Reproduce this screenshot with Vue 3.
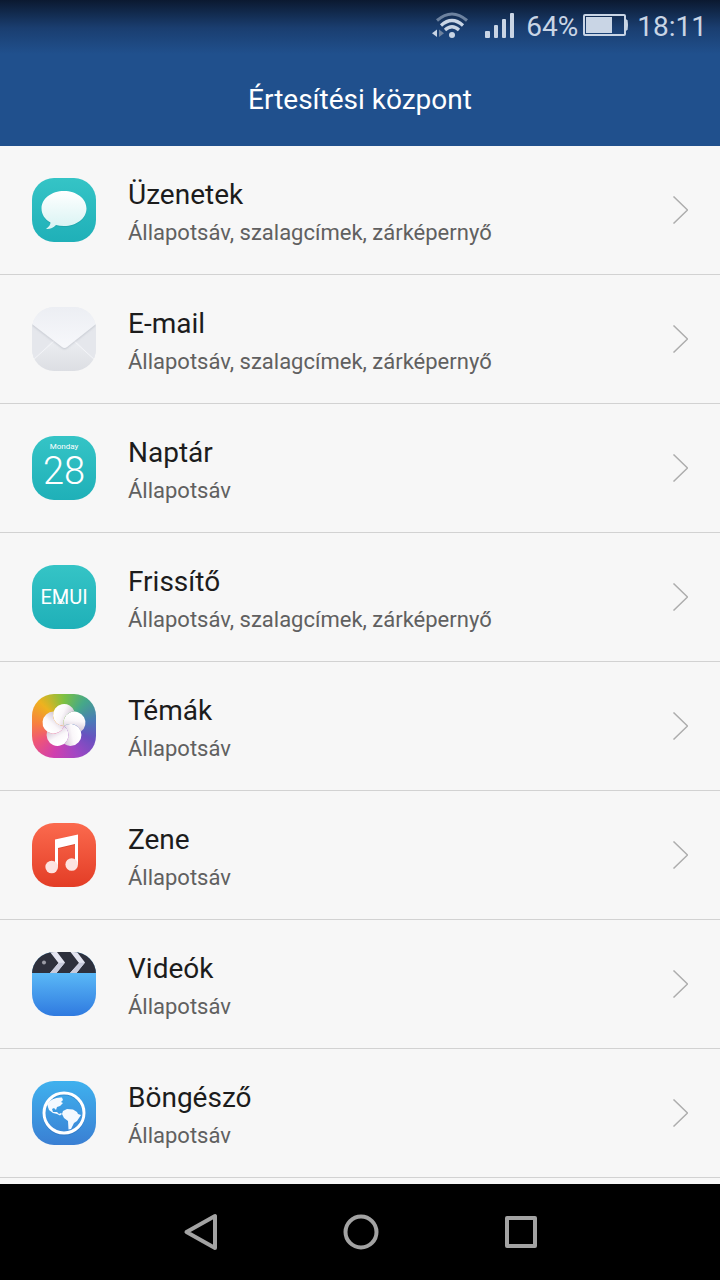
<template>
  <div class="screen">
    <header class="header">
      <div class="status">
        <svg class="wifi" width="38" height="30" viewBox="0 0 38 30" fill="none">
          <path d="M5 9.500 Q20 -3.500 35 9.500" stroke="#6d829f" stroke-width="3" />
          <path d="M9 14.500 Q20 4.500 31 14.500" stroke="#c9d5e5" stroke-width="3.200" />
          <path d="M13 19 Q20 12.500 27 19" stroke="#c9d5e5" stroke-width="3.200" />
          <circle cx="20" cy="24" r="3" fill="#c9d5e5" />
          <path d="M5 18.500 V26 L0 22.300 Z" fill="#c9d5e5" />
          <path d="M7 18.500 V26 L12 22.300 Z" fill="#6d829f" />
        </svg>
        <svg class="signal" width="30" height="26" viewBox="0 0 30 26" fill="#c9d5e5">
          <rect x="0" y="18" width="5" height="7" rx="1" />
          <rect x="9" y="12" width="4" height="13" rx="1" />
          <rect x="17" y="6" width="4" height="19" rx="1" />
          <rect x="25" y="0" width="4" height="25" rx="1" />
        </svg>
        <span class="percent">64%</span>
        <svg class="battery" width="46" height="24" viewBox="0 0 46 24">
          <rect x="1" y="1" width="41" height="20" rx="1" fill="none" stroke="#c9d5e5" stroke-width="2" />
          <rect x="3" y="3" width="26" height="16" fill="#c9d5e5" />
          <path d="M43 6 H44 Q45 11 44 16 H43 Z" fill="#c9d5e5" stroke="#c9d5e5" />
        </svg>
        <span>18:11</span>
      </div>
      <h1>Értesítési központ</h1>
    </header>

    <main>
      <ul class="list">
        <li v-for="app in apps" :key="app.icon">
          <button type="button" class="row">
            <span class="tile" :class="app.icon">
              <svg v-if="app.icon === 'messages'" viewBox="0 0 64 64">
                <defs>
                  <linearGradient id="bubble" x1="0" y1="0" x2="0" y2="1">
                    <stop offset="0" stop-color="#fff" />
                    <stop offset="1" stop-color="#d8f3f3" />
                  </linearGradient>
                </defs>
                <path d="M32 14 C44.500 14 54.500 21.500 54.500 31.500 S44.500 49 32 49 Q27.500 49 24 48 Q20 51.500 14.500 51 Q18.500 48.500 18.500 45.500 C13 42.500 9.500 37.500 9.500 31.500 C9.500 21.500 19.500 14 32 14 Z" fill="#178f96" opacity=".35" />
                <path d="M32 13 C44.500 13 54.500 20.500 54.500 30.500 S44.500 48 32 48 Q27.500 48 24 47 Q20 51.500 14 51 Q18.500 47.500 18.500 44.500 C13 41.500 9.500 36.500 9.500 30.500 C9.500 20.500 19.500 13 32 13 Z" fill="url(#bubble)" />
              </svg>

              <svg v-else-if="app.icon === 'email'" viewBox="0 0 64 64">
                <defs>
                  <linearGradient id="flap" x1="0" y1="0" x2="0" y2="1">
                    <stop offset="0" stop-color="#eceef3" />
                    <stop offset="1" stop-color="#f7f8fb" />
                  </linearGradient>
                  <filter id="flapShade" x="-10%" y="-10%" width="120%" height="130%">
                    <feDropShadow dx="0" dy="1" stdDeviation="1" flood-color="#9da2ad" flood-opacity=".5" />
                  </filter>
                </defs>
                <path d="M0 17 L20 34 L0 54 Z M64 17 L44 34 L64 54 Z" fill="#e5e7ec" />
                <path d="M0 54 L22 34 M64 54 L42 34" stroke="#f4f5f8" />
                <path d="M0 0 H64 V17 L35 40 Q32.500 42 30 40 L0 17 Z" fill="url(#flap)" filter="url(#flapShade)" />
              </svg>

              <svg v-else-if="app.icon === 'calendar'" viewBox="0 0 64 64" fill="#fff" text-anchor="middle">
                <text class="weekday" x="32" y="13">Monday</text>
                <text class="day" x="32" y="48">28</text>
              </svg>

              <svg v-else-if="app.icon === 'updater'" viewBox="0 0 64 64" fill="#fff" text-anchor="middle">
                <text class="emui" x="32" y="39">EMUI</text>
                <path d="M25.500 38.300 L29 34 L32.500 38.300 Z" fill="none" stroke="#fff" />
              </svg>

              <svg v-else-if="app.icon === 'themes'" viewBox="0 0 64 64">
                <defs>
                  <linearGradient id="petal" gradientUnits="userSpaceOnUse" x1="24" y1="18" x2="39" y2="25">
                    <stop offset="0" stop-color="#fff" />
                    <stop offset=".4" stop-color="#faf7fa" />
                    <stop offset="1" stop-color="#d3c6d6" />
                  </linearGradient>
                </defs>
                <path
                  v-for="n in 5"
                  :key="n"
                  d="M32 32 A11 11 0 1 1 42.500 17.600 A11 11 0 0 0 32 32 Z"
                  fill="url(#petal)"
                  :transform="`rotate(${n * 72} 32 32)`"
                />
              </svg>

              <svg v-else-if="app.icon === 'music'" viewBox="0 0 64 64">
                <path d="M23 16.500 L46 11.500 V41 H43 V21 L26 25 V44 H23 Z" fill="#a92a18" opacity=".3" transform="translate(0 1)" />
                <path d="M23 16.500 L46 11.500 V41 H43 V21 L26 25 V44 H23 Z" fill="#fff" />
                <circle cx="19.700" cy="44" r="6.300" fill="#fde3e0" />
                <circle cx="39.700" cy="41.500" r="6.300" fill="#fde3e0" />
              </svg>

              <svg v-else-if="app.icon === 'videos'" viewBox="0 0 64 64">
                <rect width="64" height="21" fill="#2e303c" />
                <path d="M18 0 H25 L33 10.500 L24.500 21 H18 L26.500 11 Z M38.500 0 H45 L53 10.500 L44.500 21 H38 L47 11 Z" fill="#e3e4f0" />
                <path d="M26.500 11 L33 10.500 L24.500 21 H18 Z M47 11 L53 10.500 L44.500 21 H38 Z" fill="#c9cbdc" />
                <circle cx="12" cy="10.500" r="2" fill="#9b9ca6" />
              </svg>

              <svg v-else viewBox="0 0 64 64">
                <circle cx="32" cy="33" r="20" fill="none" stroke="#1f62ad" stroke-width="3" opacity=".35" />
                <circle cx="32" cy="32" r="20" fill="none" stroke="#fff" stroke-width="3" />
                <path d="M15 23 Q20 16 30 16.500 L31 19 L29 21 L31 22 L28 25 L25 26 L24 29 L22 27 L20 28 L21 31 L25 31 L27 33 L29 32 L30 33 L28 34.500 L25 33 L21 32 L17 29 Z" fill="#f4f9ff" />
                <path d="M31 30 L35 28 L41 28.500 L45 31 L46 33 L49 34 L45 40 L42 42 L39 48 L36.500 48.500 L36 40 L32 37 L30 33 Z" fill="#f4f9ff" />
              </svg>
            </span>
            <span class="texts">
              <span class="name">{{ app.name }}</span>
              <span class="detail">{{ app.detail }}</span>
            </span>
            <svg class="chevron" width="16" height="28" viewBox="0 0 16 28" fill="none">
              <path d="M1.500 0.500 L15.500 14 L1.500 27.500" stroke="#adadad" stroke-width="1.500" />
            </svg>
          </button>
        </li>
      </ul>
    </main>

    <nav class="navbar">
      <button type="button" aria-label="Vissza">
        <svg width="40" height="40" viewBox="0 0 40 40">
          <path d="M35 4 V36 L6.500 20 Z" />
        </svg>
      </button>
      <button type="button" aria-label="Kezdőképernyő">
        <svg width="40" height="40" viewBox="0 0 40 40">
          <circle cx="21" cy="20" r="15.500" />
        </svg>
      </button>
      <button type="button" aria-label="Legutóbbi alkalmazások">
        <svg width="40" height="40" viewBox="0 0 40 40">
          <rect x="7" y="6" width="28" height="28" />
        </svg>
      </button>
    </nav>
  </div>
</template>

<script setup>
const all = 'Állapotsáv, szalagcímek, zárképernyő'
const bar = 'Állapotsáv'

const apps = [
  { icon: 'messages', name: 'Üzenetek', detail: all },
  { icon: 'email', name: 'E-mail', detail: all },
  { icon: 'calendar', name: 'Naptár', detail: bar },
  { icon: 'updater', name: 'Frissítő', detail: all },
  { icon: 'themes', name: 'Témák', detail: bar },
  { icon: 'music', name: 'Zene', detail: bar },
  { icon: 'videos', name: 'Videók', detail: bar },
  { icon: 'browser', name: 'Böngésző', detail: bar }
]
</script>

<style>
body {
  background: #f7f7f7;
}
</style>

<style scoped>
.screen {
  display: flex;
  flex-direction: column;
  min-height: 100vh;
  font-family: Roboto, "Noto Sans", sans-serif;
  color: #1c1c1c;
}
.header {
  background: linear-gradient(#0b1930, #1a3e70 28px, #20508d 54px);
}
.status {
  display: flex;
  align-items: center;
  justify-content: flex-end;
  height: 54px;
  padding-right: 13px;
  font-size: 28px;
  line-height: 54px;
  color: #c9d5e5;
}
.wifi,
.signal,
.battery {
  margin-bottom: 2px;
}
.signal {
  margin-left: 15px;
}
.percent {
  margin: 0 5px 0 11px;
}
.battery {
  margin-right: 8px;
}
h1 {
  margin: 0;
  font-size: 28px;
  font-weight: 400;
  line-height: 92px;
  text-align: center;
  color: #fff;
}
main {
  flex: 1;
}
.list {
  margin: 0;
  padding: 0;
  list-style: none;
}
.row {
  display: flex;
  align-items: center;
  gap: 32px;
  width: 100%;
  min-height: 129px;
  padding: 0 32px;
  border: none;
  border-bottom: 1px solid #d2d2d2;
  background: none;
  font: inherit;
  color: inherit;
  text-align: left;
}
.tile {
  flex: none;
  width: 64px;
  height: 64px;
  border-radius: 22px;
  overflow: hidden;
  background: linear-gradient(#35c4c6, #1fb0b8);
}
.tile svg {
  display: block;
}
.email {
  background: linear-gradient(#eceef2, #e9ebef 60%, #dcdee3);
}
.themes {
  background: conic-gradient(from 0deg, #7cc142, #45a889 40deg, #4a79b8 80deg, #6a50c0 115deg, #a047c4 155deg, #d03fae 200deg, #ee5578 240deg, #f78040 275deg, #eeb21f 315deg, #7cc142);
}
.music {
  background: linear-gradient(#fb6a4e, #e33d26);
}
.videos {
  background: linear-gradient(#5ab8f6 21px, #2f7ae0);
}
.browser {
  background: linear-gradient(#3fb1ee, #3a7fd3);
}
.weekday {
  font-size: 8px;
}
.day {
  font-size: 38px;
  font-weight: 300;
}
.emui {
  font-size: 20px;
}
.texts {
  flex: 1;
  display: flex;
  flex-direction: column;
  padding-top: 6px;
}
.name {
  font-size: 28px;
  line-height: 40px;
}
.detail {
  font-size: 22px;
  line-height: 36px;
  color: #606060;
}
.chevron {
  flex: none;
}
.navbar {
  display: flex;
  justify-content: center;
  height: 96px;
  background: #000;
}
.navbar button {
  display: flex;
  align-items: center;
  justify-content: center;
  width: 160px;
  padding: 0;
  border: none;
  background: none;
}
.navbar svg {
  fill: none;
  stroke: #a3a3a3;
  stroke-width: 4;
  stroke-linejoin: round;
}
</style>
